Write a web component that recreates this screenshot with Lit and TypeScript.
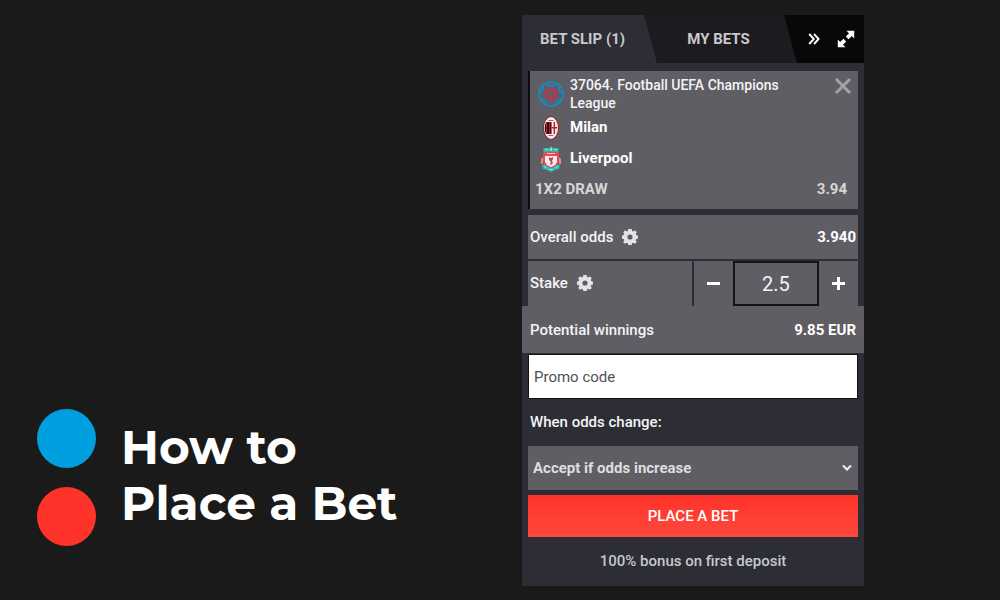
import { LitElement, html, css, svg } from "lit";
import { customElement, state } from "lit/decorators.js";

const gear = svg`<path fill="currentColor" fill-rule="evenodd" d="M6.300 0h3.400l.4 2 1.100.5 1.700-1.200 1.900 1.900-1.100 1.700.5 1.100 1.700.4v3.300l-1.700.4-.5 1.100 1.100 1.700-1.900 1.900-1.700-1.100-1.100.5-.4 1.800H6.300l-.4-1.800-1.100-.5-1.700 1.100-1.900-1.900 1.100-1.700-.5-1.100L0 9.700V6.400L1.800 6l.5-1.100-1.100-1.700 1.900-1.900 1.700 1.200L5.900 2zM8 5.400a2.600 2.600 0 1 0 0 5.200 2.600 2.600 0 0 0 0-5.200z"/>`;

@customElement("bet-slip")
class BetSlip extends LitElement {
  @state() private stake = 2.5;

  static styles = css`
    :host {
      display: block;
      background: #2d2d36;
      color: #f4f4f4;
      font: 500 15px/18px Roboto, sans-serif;
    }
    * { box-sizing: border-box; }
    button, input, select {
      font: inherit;
      color: inherit;
      margin: 0;
      padding: 0;
      border: 0;
      border-radius: 0;
      background: none;
    }
    button { cursor: pointer; }
    svg { display: block; flex: none; }
    .tabs {
      display: grid;
      grid-template-columns: 135fr 140fr 67fr;
      height: 48px;
      background: #080808;
    }
    .tab {
      color: #c9c9c9;
      font-weight: 700;
      clip-path: polygon(0 0, calc(100% - 13px) 0, 100% 100%, 0 100%);
    }
    .tab.active { background: #2d2d36; z-index: 1; padding-right: 14px; }
    .tab.idle {
      background: #1b1b20;
      margin-left: -13px;
      padding-right: 12px;
      padding-left: 8px;
    }
    .tools {
      display: flex;
      align-items: center;
      justify-content: flex-end;
      gap: 17px;
      padding-right: 9px;
      color: #fff;
    }
    .body { padding: 8px 6px 0; }
    .card {
      display: grid;
      grid-template-columns: 26px 1fr 18px;
      column-gap: 6px;
      padding: 5px 6px 5px 8px;
      border-left: 2px solid #0c0c0c;
      background: #5f5e64;
      align-items: center;
    }
    .event { font-size: 14px; padding-right: 30px; }
    .close { align-self: start; color: #a3a2a6; padding-top: 1px; }
    .crest { justify-self: center; }
    .team { grid-column: 2 / 4; font-weight: 700; line-height: 31px; color: #fff; }
    .pick {
      grid-column: 1 / 4;
      display: flex;
      justify-content: space-between;
      line-height: 30px;
      padding-right: 5px;
      margin-left: -3px;
      color: #d6d6d6;
      font-weight: 700;
    }
    .row {
      display: flex;
      align-items: center;
      justify-content: space-between;
      background: #5f5e64;
      padding: 0 2px;
    }
    .name { display: flex; align-items: center; gap: 9px; }
    .name button { color: #e4e4e4; }
    .strong { font-weight: 700; color: #fff; }
    .overall { height: 44px; margin-top: 6px; }
    .stake {
      display: grid;
      grid-template-columns: 1fr 39px 86px 39px;
      height: 45px;
      margin-top: 2px;
      background: #5f5e64;
    }
    .stake .name { padding: 0 0 2px 2px; border-right: 2px solid #2d2d36; }
    .step { display: grid; place-items: center; color: #fff; }
    .amount {
      width: 100%;
      border: 2px solid #141418;
      text-align: center;
      font-size: 20px;
      font-weight: 400;
    }
    .winnings { height: 47px; margin: 0 -6px; padding: 0 8px; }
    .promo {
      display: block;
      width: 100%;
      height: 45px;
      margin-top: 1px;
      padding: 0 5px;
      background: #fff;
      border: 1px solid #111116;
      color: #44444c;
      font-weight: 400;
    }
    .promo::placeholder { color: #505058; opacity: 1; }
    .label { display: block; padding: 14px 2px 15px; }
    .choice { display: grid; align-items: center; background: #5f5e64; }
    .choice > * { grid-area: 1 / 1; }
    .choice select {
      appearance: none;
      width: 100%;
      height: 44px;
      padding: 0 24px 0 5px;
      color: #dedede;
      font-weight: 700;
    }
    .choice svg { justify-self: end; margin-right: 6px; pointer-events: none; }
    .place {
      display: block;
      width: 100%;
      height: 42px;
      margin-top: 5px;
      background: linear-gradient(#ff3329, #ff483e);
      color: #fff;
    }
    .bonus {
      margin: 0;
      padding: 15px 0 16px;
      text-align: center;
      color: #c8c8cb;
    }
  `;

  private step(by: number) {
    this.stake = Math.max(0, this.stake + by);
  }

  render() {
    return html`
      <div class="tabs">
        <button class="tab active">BET SLIP (1)</button>
        <button class="tab idle">MY BETS</button>
        <div class="tools">
          <button aria-label="Collapse">
            <svg width="12" height="12" viewBox="0 0 12 12" fill="none" stroke="currentColor" stroke-width="1.900"><path d="M1.200 1l4.600 5-4.600 5M6 1l4.600 5L6 11"/></svg>
          </button>
          <button aria-label="Expand">
            <svg width="18" height="18" viewBox="0 0 18 18"><path fill="currentColor" d="M9.500 .8H17.200v7.700l-2.400-2.400-3.300 3.200-2.700-2.700 3.200-3.300zM.8 9.500l2.400 2.400 3.300-3.200 2.700 2.700-3.200 3.300 2.500 2.500H.8z"/></svg>
          </button>
        </div>
      </div>
      <div class="body">
        <section class="card">
          <svg width="26" height="26" viewBox="0 0 26 26" fill="none" stroke="#0d8fce" stroke-width="1.500">
            <circle cx="13" cy="13" r="12"/>
            <path d="M8 2.500Q9 5 13 5T18 2.500M1.500 12Q4.500 11 4.800 8.500T4.500 5M24.500 12Q21.500 11 21.200 8.500T21.500 5M3 19Q6 18.500 7.500 20.500T8.500 24M23 19Q20 18.500 18.500 20.500T17.500 24"/>
            <path stroke="#f01c55" stroke-width="1.700" d="M13 7.500l5.300 3.900-2 6.100H9.700l-2-6.100z"/>
          </svg>
          <div class="event">37064. Football UEFA Champions League</div>
          <button class="close" aria-label="Remove">
            <svg width="18" height="18" viewBox="0 0 18 18" fill="none" stroke="currentColor" stroke-width="3"><path d="M2 2l14 14M16 2L2 16"/></svg>
          </button>
          <svg class="crest" width="16" height="24" viewBox="0 0 16 24">
            <defs><clipPath id="oval"><ellipse cx="8" cy="12" rx="6.300" ry="9.500"/></clipPath></defs>
            <ellipse cx="8" cy="12" rx="7.800" ry="11.800" fill="#a51520"/>
            <ellipse cx="8" cy="12" rx="7" ry="10.900" fill="#f3eeee"/>
            <g clip-path="url(#oval)">
              <path fill="#1a0c0e" d="M1 6h7.500v12H1z"/>
              <path fill="#c91824" d="M3 6h1.300v12H3zM6 6h1.300v12H6zM10.600 6h1.500v12h-1.500zM8.500 11h6.500v1.600H8.500z"/>
              <path fill="#777" d="M5.500 4h5v1h-5zM5.500 19h5v1h-5z"/>
            </g>
          </svg>
          <div class="team">Milan</div>
          <svg class="crest" width="20" height="26" viewBox="0 0 20 26">
            <path fill="#35b9ad" d="M8 2l2-2 2 2h4l2 1-1 4q-7-2-14 0L2 3l2-1zM1 19l4-1 5 3 5-3 4 1-1 4-4 1-4 2-4-2-4-1z"/>
            <path fill="#8fded3" d="M4 3h3v1H4zM9 2h2v3H9zM13 3h3v1h-3zM3 20l3 1-1 1-2-1zM14 21l3-1v1l-2 1zM8 23h4v1H8z"/>
            <path fill="#e9465b" d="M2 7q8-3 16 0v8q-1 5-8 7-7-2-8-7z"/>
            <path fill="#f7eeee" d="M4 10h12v5.500q-1 4-6 5.500-5-1.500-6-5.500z"/>
            <path fill="#df3850" d="M8 11l2 1 2-1v2l-1 2 1 2-2 2-1-1 1-2-2-2z"/>
            <path fill="#ef8a68" d="M0 13l2-2v7H0zM20 13l-2-2v7h2z"/>
            <path fill="#f9b9c0" d="M6 7h8v1H6z"/>
          </svg>
          <div class="team">Liverpool</div>
          <div class="pick"><span>1X2 DRAW</span><span>3.94</span></div>
        </section>

        <div class="row overall">
          <span class="name">Overall odds
            <button aria-label="Odds settings"><svg width="16" height="16" viewBox="0 0 16 16">${gear}</svg></button>
          </span>
          <span class="strong">3.940</span>
        </div>

        <div class="stake">
          <span class="name"><label for="stake">Stake</label>
            <button aria-label="Stake settings"><svg width="16" height="16" viewBox="0 0 16 16">${gear}</svg></button>
          </span>
          <button class="step" aria-label="Decrease" @click=${() => this.step(-0.5)}>
            <svg width="13" height="13" viewBox="0 0 13 13"><path fill="currentColor" d="M0 5h13v3H0z"/></svg>
          </button>
          <input class="amount" id="stake" .value=${String(this.stake)} />
          <button class="step" aria-label="Increase" @click=${() => this.step(0.5)}>
            <svg width="13" height="13" viewBox="0 0 13 13"><path fill="currentColor" d="M5 0h3v5h5v3H8v5H5V8H0V5h5z"/></svg>
          </button>
        </div>

        <div class="row winnings">
          <span>Potential winnings</span>
          <span class="strong">9.85 EUR</span>
        </div>

        <input class="promo" placeholder="Promo code" aria-label="Promo code" />
        <label class="label" for="change">When odds change:</label>
        <div class="choice">
          <select id="change"><option>Accept if odds increase</option></select>
          <svg width="10" height="8" viewBox="0 0 10 8" fill="none" stroke="#f0f0f0" stroke-width="2"><path d="M1 1.500l4 4 4-4"/></svg>
        </div>
        <button class="place">PLACE A BET</button>
        <p class="bonus">100% bonus on first deposit</p>
      </div>
    `;
  }
}

@customElement("app-root")
class AppRoot extends LitElement {
  static styles = css`
    :host {
      display: grid;
      grid-template-columns: minmax(0, 522fr) minmax(320px, 342fr) minmax(0, 136fr);
      box-sizing: border-box;
      min-height: 100vh;
      padding: 15px 0 14px;
      background: #1a1a1a;
    }
    .intro {
      align-self: end;
      display: flex;
      align-items: center;
      gap: 25px;
      padding: 0 0 40px 37px;
    }
    .dots { display: grid; gap: 19px; flex: none; }
    .dot { width: 59px; height: 59px; border-radius: 50%; }
    .blue { background: #009fe0; }
    .red { background: #ff3329; }
    h1 {
      margin: 0;
      padding-bottom: 4px;
      color: #fff;
      font: 700 47px/56px Montserrat, Inter, sans-serif;
    }
    bet-slip { align-self: start; }
  `;

  render() {
    return html`
      <div class="intro">
        <div class="dots">
          <div class="dot blue"></div>
          <div class="dot red"></div>
        </div>
        <h1>How to<br />Place a Bet</h1>
      </div>
      <bet-slip></bet-slip>
    `;
  }
}
